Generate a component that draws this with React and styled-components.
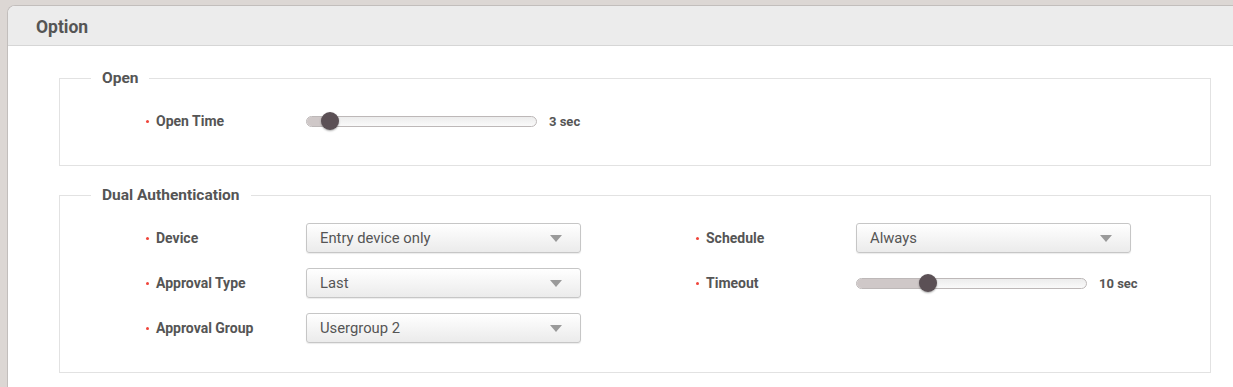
import React from "react";
import styled, { createGlobalStyle } from "styled-components";

const GlobalStyle = createGlobalStyle`
  html, body {
    margin: 0;
    padding: 0;
    background: #dcd7d4;
    font-family: Roboto, "Liberation Sans", sans-serif;
    color: #555;
  }
`;

const Panel = styled.div`
  margin: 5px 0 0 7px;
  background: #fff;
  border-top: 1px solid #c2bebc;
  border-left: 1px solid #c2bebc;
  border-top-left-radius: 8px;
  min-height: 382px;
  overflow: hidden;
`;

const Header = styled.div`
  box-sizing: border-box;
  height: 40px;
  background: #ececec;
  border-bottom: 1px solid #d6d6d6;
  display: flex;
  align-items: center;
  padding: 3px 0 0 28px;
  font-size: 17.5px;
  font-weight: 700;
  color: #555;
`;

const Body = styled.div`
  padding: 22px 22px 0 51px;
  display: flex;
  flex-direction: column;
  gap: 19px;
`;

const Fieldset = styled.fieldset`
  margin: 0;
  border: 1px solid #e2e2e2;
  padding: ${(p) => p.$pad};
  min-width: 0;
`;

const Legend = styled.legend`
  margin-left: 31px;
  padding: 0 11px;
  font-size: 15.5px;
  line-height: 20px;
  font-weight: 700;
  color: #555;
`;

const Grid = styled.div`
  display: grid;
  grid-template-columns: 550px 1fr;
  row-gap: 15px;
  padding-left: 85px;
`;

const Field = styled.div`
  display: flex;
  align-items: center;
  height: 30px;
  grid-column: ${(p) => p.$col || "auto"};
`;

const Label = styled.div`
  width: 150px;
  padding-left: 11px;
  position: relative;
  font-size: 14px;
  font-weight: 700;
  color: #555;
  &::before {
    content: "";
    position: absolute;
    left: 1px;
    top: 50%;
    width: 3px;
    height: 3px;
    margin-top: -1px;
    border-radius: 50%;
    background: #f0443a;
  }
`;

const SliderWrap = styled.div`
  display: flex;
  align-items: center;
`;

const Track = styled.div`
  position: relative;
  width: 229px;
  height: 9px;
  border: 1px solid #bdb8b8;
  border-radius: 6px;
  background: linear-gradient(#ececec, #fafafa);
`;

const Fill = styled.div`
  height: 100%;
  border-radius: 6px 0 0 6px;
  background: #cfc8c8;
`;

const Thumb = styled.div`
  position: absolute;
  top: 50%;
  width: 18px;
  height: 18px;
  margin: -9px 0 0 -9px;
  border-radius: 50%;
  background: #5b5055;
  box-shadow: 0 1px 2px rgba(0, 0, 0, 0.35);
`;

const Value = styled.span`
  margin-left: 12px;
  font-size: 13px;
  font-weight: 700;
  color: #555;
`;

const Select = styled.div`
  box-sizing: border-box;
  width: 275px;
  height: 30px;
  display: flex;
  align-items: center;
  justify-content: space-between;
  padding: 0 18px 0 13px;
  border: 1px solid #c6c6c6;
  border-radius: 3px;
  background: linear-gradient(#ffffff, #ebebeb);
  box-shadow: 0 1px 1px rgba(0, 0, 0, 0.08);
  font-size: 14.8px;
  color: #555;
`;

const Arrow = styled.span`
  width: 0;
  height: 0;
  border-left: 6px solid transparent;
  border-right: 6px solid transparent;
  border-top: 7px solid #9a9a9a;
`;

function Slider({ pct, value }) {
  return (
    <SliderWrap>
      <Track>
        <Fill style={{ width: `${pct}%` }} />
        <Thumb style={{ left: `${pct}%` }} />
      </Track>
      <Value>{value}</Value>
    </SliderWrap>
  );
}

function Dropdown({ children }) {
  return (
    <Select>
      <span>{children}</span>
      <Arrow />
    </Select>
  );
}

export default function App() {
  return (
    <>
      <GlobalStyle />
      <Panel>
        <Header>Option</Header>
        <Body>
          <Fieldset $pad="18px 0 29px">
            <Legend>Open</Legend>
            <Grid>
              <Field $col="1">
                <Label>Open Time</Label>
                <Slider pct={10} value="3 sec" />
              </Field>
            </Grid>
          </Fieldset>
          <Fieldset $pad="18px 0 29px">
            <Legend>Dual Authentication</Legend>
            <Grid>
              <Field>
                <Label>Device</Label>
                <Dropdown>Entry device only</Dropdown>
              </Field>
              <Field>
                <Label>Schedule</Label>
                <Dropdown>Always</Dropdown>
              </Field>
              <Field>
                <Label>Approval Type</Label>
                <Dropdown>Last</Dropdown>
              </Field>
              <Field>
                <Label>Timeout</Label>
                <Slider pct={31} value="10 sec" />
              </Field>
              <Field $col="1">
                <Label>Approval Group</Label>
                <Dropdown>Usergroup 2</Dropdown>
              </Field>
            </Grid>
          </Fieldset>
        </Body>
      </Panel>
    </>
  );
}
